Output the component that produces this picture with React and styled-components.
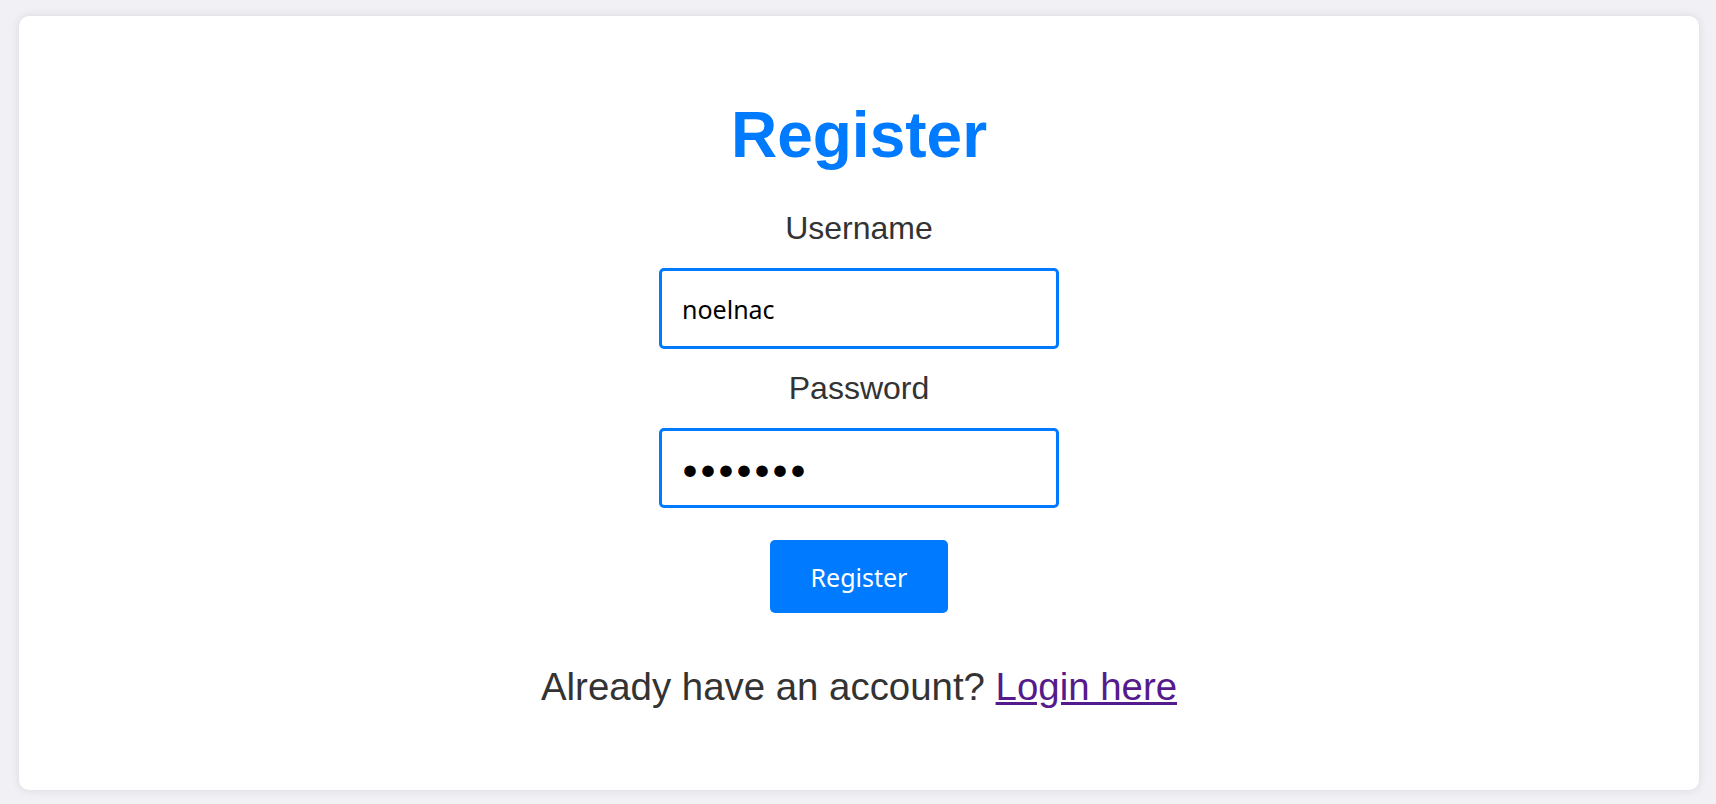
import React from 'react'
import styled, { createGlobalStyle } from 'styled-components'

const GlobalStyle = createGlobalStyle`
  html, body {
    margin: 0;
    padding: 0;
    background-color: #f0f0f5;
    font-family: "Liberation Sans", Arial, sans-serif;
  }
`

const Page = styled.div`
  padding: 16px 17px 14px 19px;
`

const Card = styled.div`
  background-color: #ffffff;
  border-radius: 10px;
  box-shadow: 0 0 10px rgba(0, 0, 0, 0.1);
  padding: 40px 40px 43px;
  display: flex;
  flex-direction: column;
  align-items: center;
`

const Title = styled.h1`
  margin: 42px 0 38px;
  font-size: 64px;
  font-weight: 700;
  color: #007bff;
  line-height: normal;
`

const Form = styled.form`
  display: flex;
  flex-direction: column;
  align-items: center;
`

const Label = styled.label`
  display: block;
  font-size: 32px;
  color: #333333;
  margin-bottom: 21px;
`

const Input = styled.input`
  box-sizing: border-box;
  width: 400px;
  height: ${props => props.$tall ? 81 : 80}px;
  padding: 0 20px;
  border: 3px solid #007bff;
  border-radius: 5px;
  font-family: "Noto Sans", sans-serif;
  font-size: 25px;
  color: #000000;
  outline: none;
  margin-bottom: ${props => props.$last ? 32 : 21}px;

  &[type="password"] {
    font-family: Lato, sans-serif;
    font-size: 31px;
    padding-left: 19px;
  }
`

const Button = styled.button`
  width: 178px;
  height: 73px;
  border: none;
  border-radius: 5px;
  background-color: #007bff;
  color: #ffffff;
  font-family: "Noto Sans", sans-serif;
  font-size: 25px;
  cursor: pointer;
`

const Footer = styled.p`
  margin: 52px 0 38px;
  font-size: 38.4px;
  color: #333333;
`

const Link = styled.a`
  color: #551a8b;
  text-decoration: underline;
`

const App = () => (
  <Page>
    <GlobalStyle />
    <Card>
      <Title>Register</Title>
      <Form onSubmit={e => e.preventDefault()}>
        <Label htmlFor="username">Username</Label>
        <Input id="username" type="text" defaultValue="noelnac" $tall />
        <Label htmlFor="password">Password</Label>
        <Input id="password" type="password" defaultValue="1234567" $last />
        <Button type="submit">Register</Button>
      </Form>
      <Footer>
        Already have an account? <Link href="#login">Login here</Link>
      </Footer>
    </Card>
  </Page>
)

export default App
